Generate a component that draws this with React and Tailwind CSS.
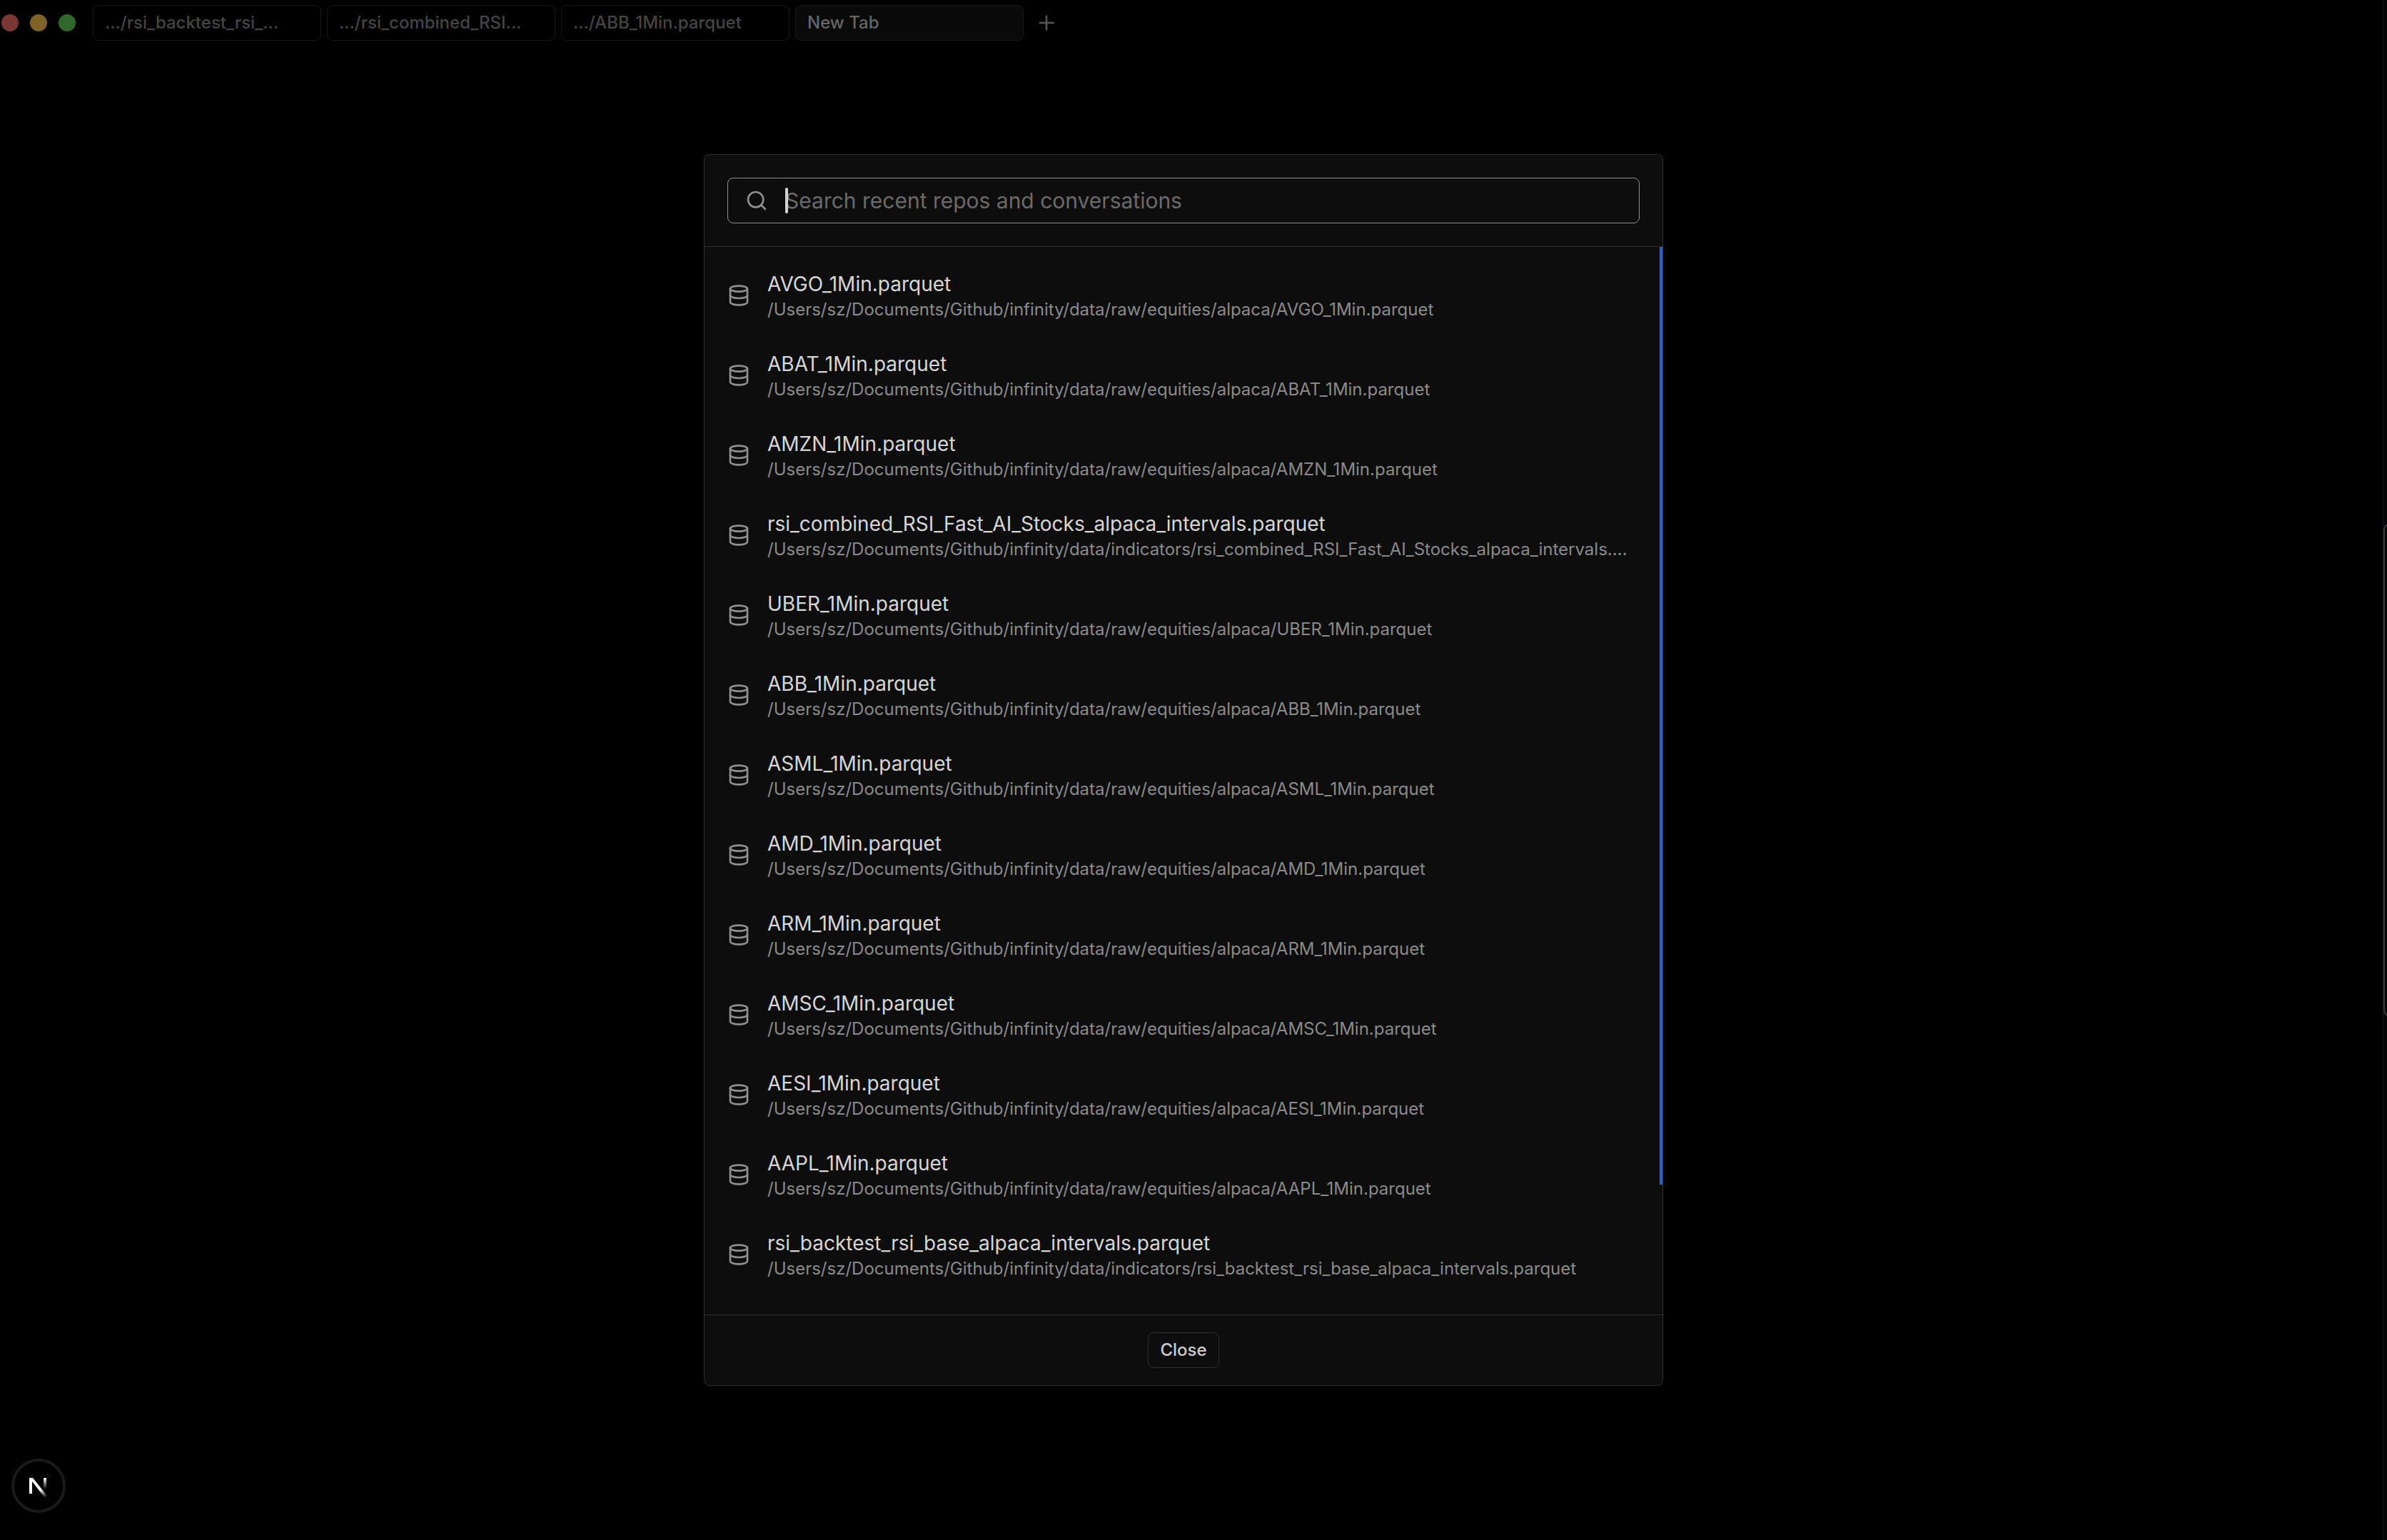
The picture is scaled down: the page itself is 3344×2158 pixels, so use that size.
import { useState } from "react";
import { Database, Plus, Search } from "lucide-react";

const BASE = "/Users/sz/Documents/Github/infinity/data";

const TABS = [
    { label: ".../rsi_backtest_rsi_...", active: false },
    { label: ".../rsi_combined_RSI...", active: false },
    { label: ".../ABB_1Min.parquet", active: false },
    { label: "New Tab", active: true },
];

const FILES = [
    { dir: "raw/equities/alpaca", name: "AVGO_1Min.parquet" },
    { dir: "raw/equities/alpaca", name: "ABAT_1Min.parquet" },
    { dir: "raw/equities/alpaca", name: "AMZN_1Min.parquet" },
    { dir: "indicators", name: "rsi_combined_RSI_Fast_AI_Stocks_alpaca_intervals.parquet" },
    { dir: "raw/equities/alpaca", name: "UBER_1Min.parquet" },
    { dir: "raw/equities/alpaca", name: "ABB_1Min.parquet" },
    { dir: "raw/equities/alpaca", name: "ASML_1Min.parquet" },
    { dir: "raw/equities/alpaca", name: "AMD_1Min.parquet" },
    { dir: "raw/equities/alpaca", name: "ARM_1Min.parquet" },
    { dir: "raw/equities/alpaca", name: "AMSC_1Min.parquet" },
    { dir: "raw/equities/alpaca", name: "AESI_1Min.parquet" },
    { dir: "raw/equities/alpaca", name: "AAPL_1Min.parquet" },
    { dir: "indicators", name: "rsi_backtest_rsi_base_alpaca_intervals.parquet" },
];

function TabBar() {
    return (
        <header className="flex items-center h-16 pl-0.5">
            <div className="flex gap-4 mr-6">
                <span className="size-6 rounded-full bg-[#7a3632]" />
                <span className="size-6 rounded-full bg-[#7f6228]" />
                <span className="size-6 rounded-full bg-[#30682b]" />
            </div>

            <nav className="flex gap-2">
                {TABS.map((tab) => (
                    <button
                        key={tab.label}
                        className={
                            tab.active
                                ? "w-80 rounded-lg border border-[#181818] bg-[#0a0a0a] px-4 py-2 text-left text-[24px] leading-8 font-medium text-[#666666]"
                                : "w-80 rounded-lg border border-[#181818] px-4 py-2 text-left text-[24px] leading-8 font-medium text-[#444444]"
                        }
                    >
                        {tab.label}
                    </button>
                ))}
            </nav>

            <button aria-label="New tab" className="ml-4 text-[#555555]">
                <Plus className="size-8" strokeWidth={2} />
            </button>
        </header>
    );
}

function FileRow({ dir, name }) {
    return (
        <li>
            <button className="flex w-full items-center gap-6 rounded-lg p-4 text-left">
                <Database className="size-8 shrink-0 text-[#8f8f8f]" strokeWidth={2} />
                <span className="min-w-0 flex-1">
                    <span className="block truncate text-[28px] leading-10 text-[#d6d6d6]">
                        {name}
                    </span>
                    <span className="block truncate text-[24px] leading-8 text-[#8a8a8a]">
                        {BASE}/{dir}/{name}
                    </span>
                </span>
            </button>
        </li>
    );
}

function RecentDialog() {
    const [query, setQuery] = useState("");

    const files = FILES.filter((file) =>
        file.name.toLowerCase().includes(query.toLowerCase())
    );

    return (
        <section
            role="dialog"
            aria-label="Recent files"
            className="flex h-[80vh] w-full max-w-[1344px] flex-col overflow-hidden rounded-lg border border-[#2e2e2e] bg-[#0d0d0d]"
        >
            {/* SEARCH */}
            <div className="border-b border-[#2e2e2e] p-8">
                <label className="flex h-16 items-center gap-6 rounded-lg border border-[#8f8f8f] px-6">
                    <Search className="size-8 shrink-0 text-[#8f8f8f]" strokeWidth={2} />
                    <span className="relative flex flex-1 items-center">
                        <input
                            type="text"
                            aria-label="Search recent repos and conversations"
                            placeholder="Search recent repos and conversations"
                            value={query}
                            onChange={(e) => setQuery(e.target.value)}
                            className="min-w-0 flex-1 bg-transparent text-[30px] leading-10 text-[#d6d6d6] caret-transparent outline-none placeholder:text-[#6a6a6a]"
                        />
                        <span className="absolute left-0 h-9 w-1 rounded-sm bg-[#d4d4d4]" />
                    </span>
                </label>
            </div>

            {/* LIST */}
            <div className="flex min-h-0 flex-1 overflow-hidden">
                <ul className="flex min-w-0 flex-1 flex-col gap-2 p-4">
                    {files.map((file) => (
                        <FileRow key={file.name} {...file} />
                    ))}
                </ul>
                <div className="h-[87.8%] w-1 shrink-0 bg-[#2a62c9]" />
            </div>

            {/* FOOTER */}
            <div className="flex justify-center border-t border-[#2e2e2e] py-6">
                <button className="rounded-lg border border-[#2e2e2e] px-4 py-2 text-[24px] leading-8 font-medium text-[#cccccc]">
                    Close
                </button>
            </div>
        </section>
    );
}

function DevBadge() {
    return (
        <button
            aria-label="Open dev tools"
            className="absolute bottom-[38px] left-4 flex size-[76px] items-center justify-center rounded-full border-4 border-[#1a1a1a] bg-black"
        >
            <svg className="size-10" viewBox="0 0 40 40" fill="none">
                <defs>
                    <linearGradient id="stem" x1="0" y1="9" x2="0" y2="25" gradientUnits="userSpaceOnUse">
                        <stop stopColor="#fff" />
                        <stop offset="1" stopColor="#fff" stopOpacity="0" />
                    </linearGradient>
                    <linearGradient id="diagonal" x1="23" y1="25" x2="31" y2="36" gradientUnits="userSpaceOnUse">
                        <stop stopColor="#fff" />
                        <stop offset="1" stopColor="#fff" stopOpacity="0" />
                    </linearGradient>
                </defs>
                <rect x="27" y="9" width="4" height="16" fill="url(#stem)" />
                <path d="M7 31V9h5l20 25-3 3L11 14v17z" fill="url(#diagonal)" />
            </svg>
        </button>
    );
}

function App() {
    return (
        <div className="relative min-h-screen overflow-hidden bg-black font-['Inter',sans-serif]">
            <TabBar />

            {/* DIALOG LAYER */}
            <div className="absolute inset-0 flex items-center justify-center pr-7">
                <RecentDialog />
            </div>

            <DevBadge />

            {/* PAGE SCROLLBAR */}
            <div className="absolute inset-y-0 right-0 flex w-1.5 flex-col overflow-hidden border-l border-[#141414] bg-[#030506] pt-[34vh]">
                <div className="h-[32vh] w-4 rounded-full border-2 border-[#3a3a3a]" />
            </div>
        </div>
    );
}

export default App;
